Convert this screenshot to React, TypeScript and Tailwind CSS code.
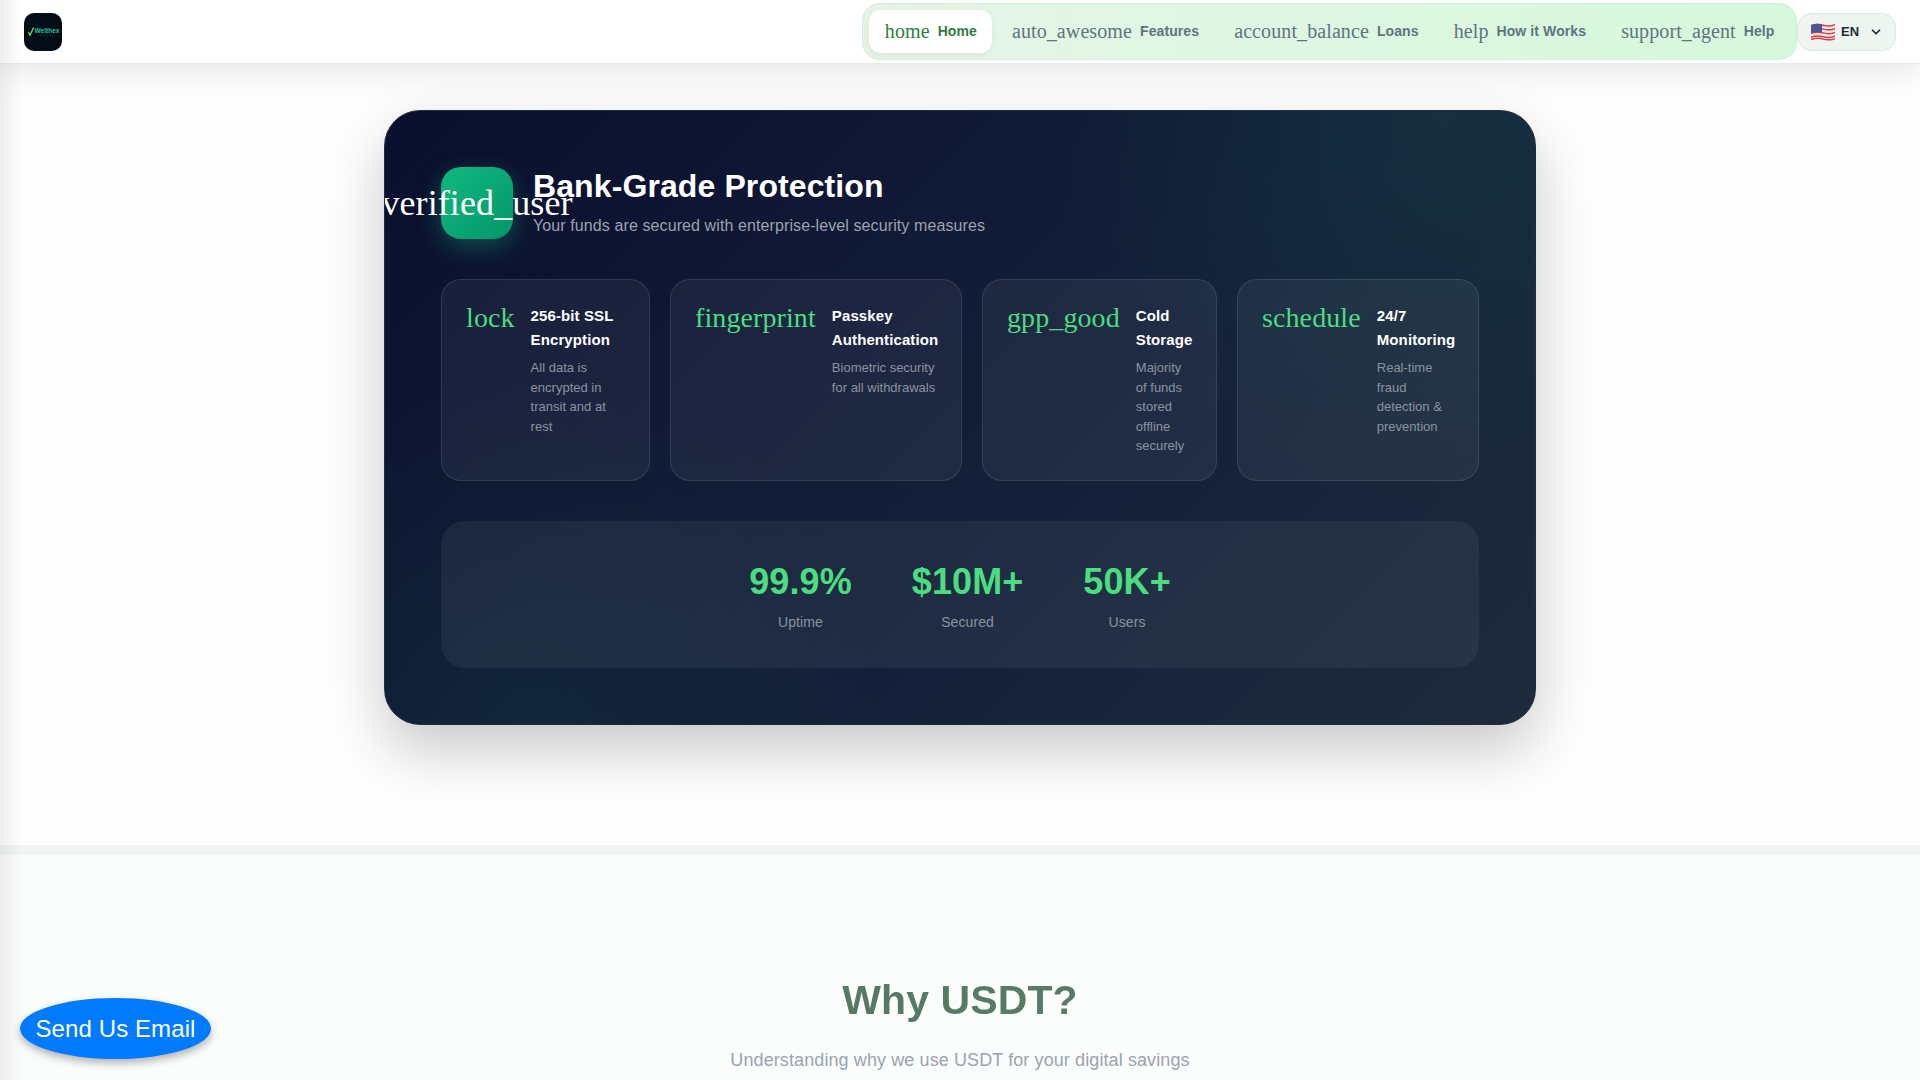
import { ChevronDown } from "lucide-react";

const sans = "font-['Liberation_Sans',Arial,sans-serif]";
const serif = "font-['Liberation_Serif','Times_New_Roman',serif]";

const navItems = [
  { icon: "home", label: "Home", active: true },
  { icon: "auto_awesome", label: "Features" },
  { icon: "account_balance", label: "Loans" },
  { icon: "help", label: "How it Works" },
  { icon: "support_agent", label: "Help" },
];

const features = [
  { icon: "lock", title: "256-bit SSL Encryption", text: "All data is encrypted in transit and at rest" },
  { icon: "fingerprint", title: "Passkey Authentication", text: "Biometric security for all withdrawals" },
  { icon: "gpp_good", title: "Cold Storage", text: "Majority of funds stored offline securely" },
  { icon: "schedule", title: "24/7 Monitoring", text: "Real-time fraud detection & prevention" },
];

const stats = [
  { value: "99.9%", label: "Uptime" },
  { value: "$10M+", label: "Secured" },
  { value: "50K+", label: "Users" },
];

const UsFlag = () => (
  <svg width="24" height="20" viewBox="0 0 24 20" className="shrink-0">
    <path d="M0 3 Q6 0.5 12 2.5 T24 2 V17 Q18 19.5 12 17.5 T0 18 Z" fill="#f3e9ea" />
    {[3.8, 7.6, 11.4, 15.2, 17.6].map((y) => (
      <path key={y} d={`M0 ${y} Q6 ${y - 2.2} 12 ${y - 0.5} T24 ${y - 1}`} stroke="#d5404c" strokeWidth="1.5" fill="none" />
    ))}
    <path d="M0 3 Q5 1 11 2.2 V10.6 Q5 9.4 0 11 Z" fill="#4c568f" />
  </svg>
);

const Logo = () => (
  <div className="flex h-[38px] w-[38px] items-center justify-center gap-[1px] rounded-[10px] bg-[#020d17] pl-[1px] tracking-normal">
    <svg width="6" height="9" viewBox="0 0 6 9" className="shrink-0">
      <path d="M0.5 5 L2 8.5 L5.5 0.5" stroke="#7ddc6a" strokeWidth="1.2" fill="none" />
    </svg>
    <div className="flex flex-col items-center">
      <span className="text-[6.5px] leading-[7px] font-bold text-[#22c39a]">Welthex</span>
      <span className="text-[2.5px] leading-[3px] tracking-[1px] text-[#4a7f78]">WALLET</span>
    </div>
  </div>
);

const Header = () => (
  <header className="relative z-10 flex h-[64px] items-center justify-between border-b border-[#e3ece8] bg-white px-[24px] shadow-[0_4px_36px_rgba(0,0,0,0.12)]">
    <Logo />
    <div className="flex items-center">
      <nav className="flex h-[57px] items-center gap-[4px] rounded-[18px] border border-[#d5ecd9] bg-gradient-to-r from-[#e6f5e8] to-[#d6f8db] px-[6px]">
        {navItems.map((item) => (
          <a
            key={item.icon}
            className={`flex h-[43px] items-center gap-[8px] rounded-[12px] px-[15.5px] ${
              item.active ? "bg-white text-[#2e7d3e] shadow-[0_2px_8px_rgba(0,0,0,0.06)]" : "text-[#5f7480]"
            }`}
          >
            <span className={`${serif} -mt-[2px] text-[20px] leading-none`}>{item.icon}</span>
            <span className="text-[14px] font-bold">{item.label}</span>
          </a>
        ))}
      </nav>
      <button className="flex h-[38px] w-[99px] items-center rounded-[14px] border border-[#dbe9df] bg-[#eef5f0] pl-[13px] text-[13px] font-bold text-[#1f2937]">
        <UsFlag />
        <span className="ml-[6px]">EN</span>
        <ChevronDown size={14} strokeWidth={3} className="ml-[10px]" />
      </button>
    </div>
  </header>
);

const FeatureCard = ({ icon, title, text }: (typeof features)[number]) => (
  <div className="flex gap-[16px] rounded-[20px] border border-white/10 bg-white/[0.055] px-[24px] pt-[24px]">
    <span className={`${serif} shrink-0 text-[28px] leading-[28px] text-[#4ade80]`}>{icon}</span>
    <div className="min-w-0">
      <div className="text-[15px] leading-[24px] font-bold text-white">{title}</div>
      <div className="mt-[6px] text-[13px] leading-[19.5px] tracking-normal text-[#8b93a0]">{text}</div>
    </div>
  </div>
);

const SecurityCard = () => (
  <div className="mx-auto w-[1152px] overflow-hidden rounded-[36px] border border-[#1f2d3d] bg-[radial-gradient(circle_at_92%_0%,rgba(20,70,70,0.4),transparent_32%),radial-gradient(circle_at_12%_100%,rgba(20,70,70,0.25),transparent_30%),linear-gradient(135deg,#0a0f2e,#14203a_60%,#1e2b3c)] p-[56px] shadow-[0_25px_60px_rgba(0,0,0,0.22)]">
    <div className="flex items-start gap-[20px]">
      <div className="flex h-[72px] w-[72px] shrink-0 items-center justify-center rounded-[20px] bg-gradient-to-br from-[#10b981] to-[#059669] shadow-[0_8px_24px_rgba(16,185,129,0.35)]">
        <span className={`${serif} text-[36px] leading-none whitespace-nowrap text-white`}>verified_user</span>
      </div>
      <div>
        <h2 className="mb-[8px] text-[32px] leading-[38.4px] font-bold text-white">Bank-Grade Protection</h2>
        <p className="text-[16px] leading-[25.6px] text-[#9ca3af]">Your funds are secured with enterprise-level security measures</p>
      </div>
    </div>
    <div className="mt-[40px] grid h-[202px] grid-cols-[209px_292px_235px_242px] gap-[20px]">
      {features.map((f) => (
        <FeatureCard key={f.icon} {...f} />
      ))}
    </div>
    <div className="mt-[40px] flex h-[147px] items-start justify-center gap-[60px] rounded-[24px] bg-white/[0.055] pt-[32px]">
      {stats.map((s) => (
        <div key={s.label} className="text-center">
          <div className="text-[36px] leading-[57.6px] font-bold text-[#4ade80]">{s.value}</div>
          <div className="text-[14px] leading-[22.4px] text-[#8b93a0]">{s.label}</div>
        </div>
      ))}
    </div>
  </div>
);

export default function App() {
  return (
    <div className={`${sans} relative h-screen overflow-hidden bg-white tracking-[0.1px]`}>
      <Header />
      <section className="h-[781px] bg-[#fefefe] pt-[46px]">
        <SecurityCard />
      </section>
      <div className="h-[10px] bg-[#f2f5f3]" />
      <section className="h-[225px] bg-[#fbfcfc] pt-[121px] text-center">
        <h2 className="bg-gradient-to-r from-[#4f6a5c] to-[#5f8a70] bg-clip-text text-[41px] leading-[48px] font-bold text-transparent">
          Why USDT?
        </h2>
        <p className="mt-[22px] text-[18px] leading-[28.8px] text-[#9ca3af]">Understanding why we use USDT for your digital savings</p>
      </section>
      {/* faint shadow down the left edge of the page */}
      <div className="pointer-events-none absolute inset-y-0 left-0 z-20 w-[22px] bg-gradient-to-r from-black/[0.07] to-transparent" />
      <button className="absolute top-[998px] left-[20px] z-30 h-[61px] w-[191px] rounded-[50%] bg-[#007bff] text-[24px] text-white shadow-[0_4px_8px_rgba(0,0,0,0.3)]">
        Send Us Email
      </button>
    </div>
  );
}
